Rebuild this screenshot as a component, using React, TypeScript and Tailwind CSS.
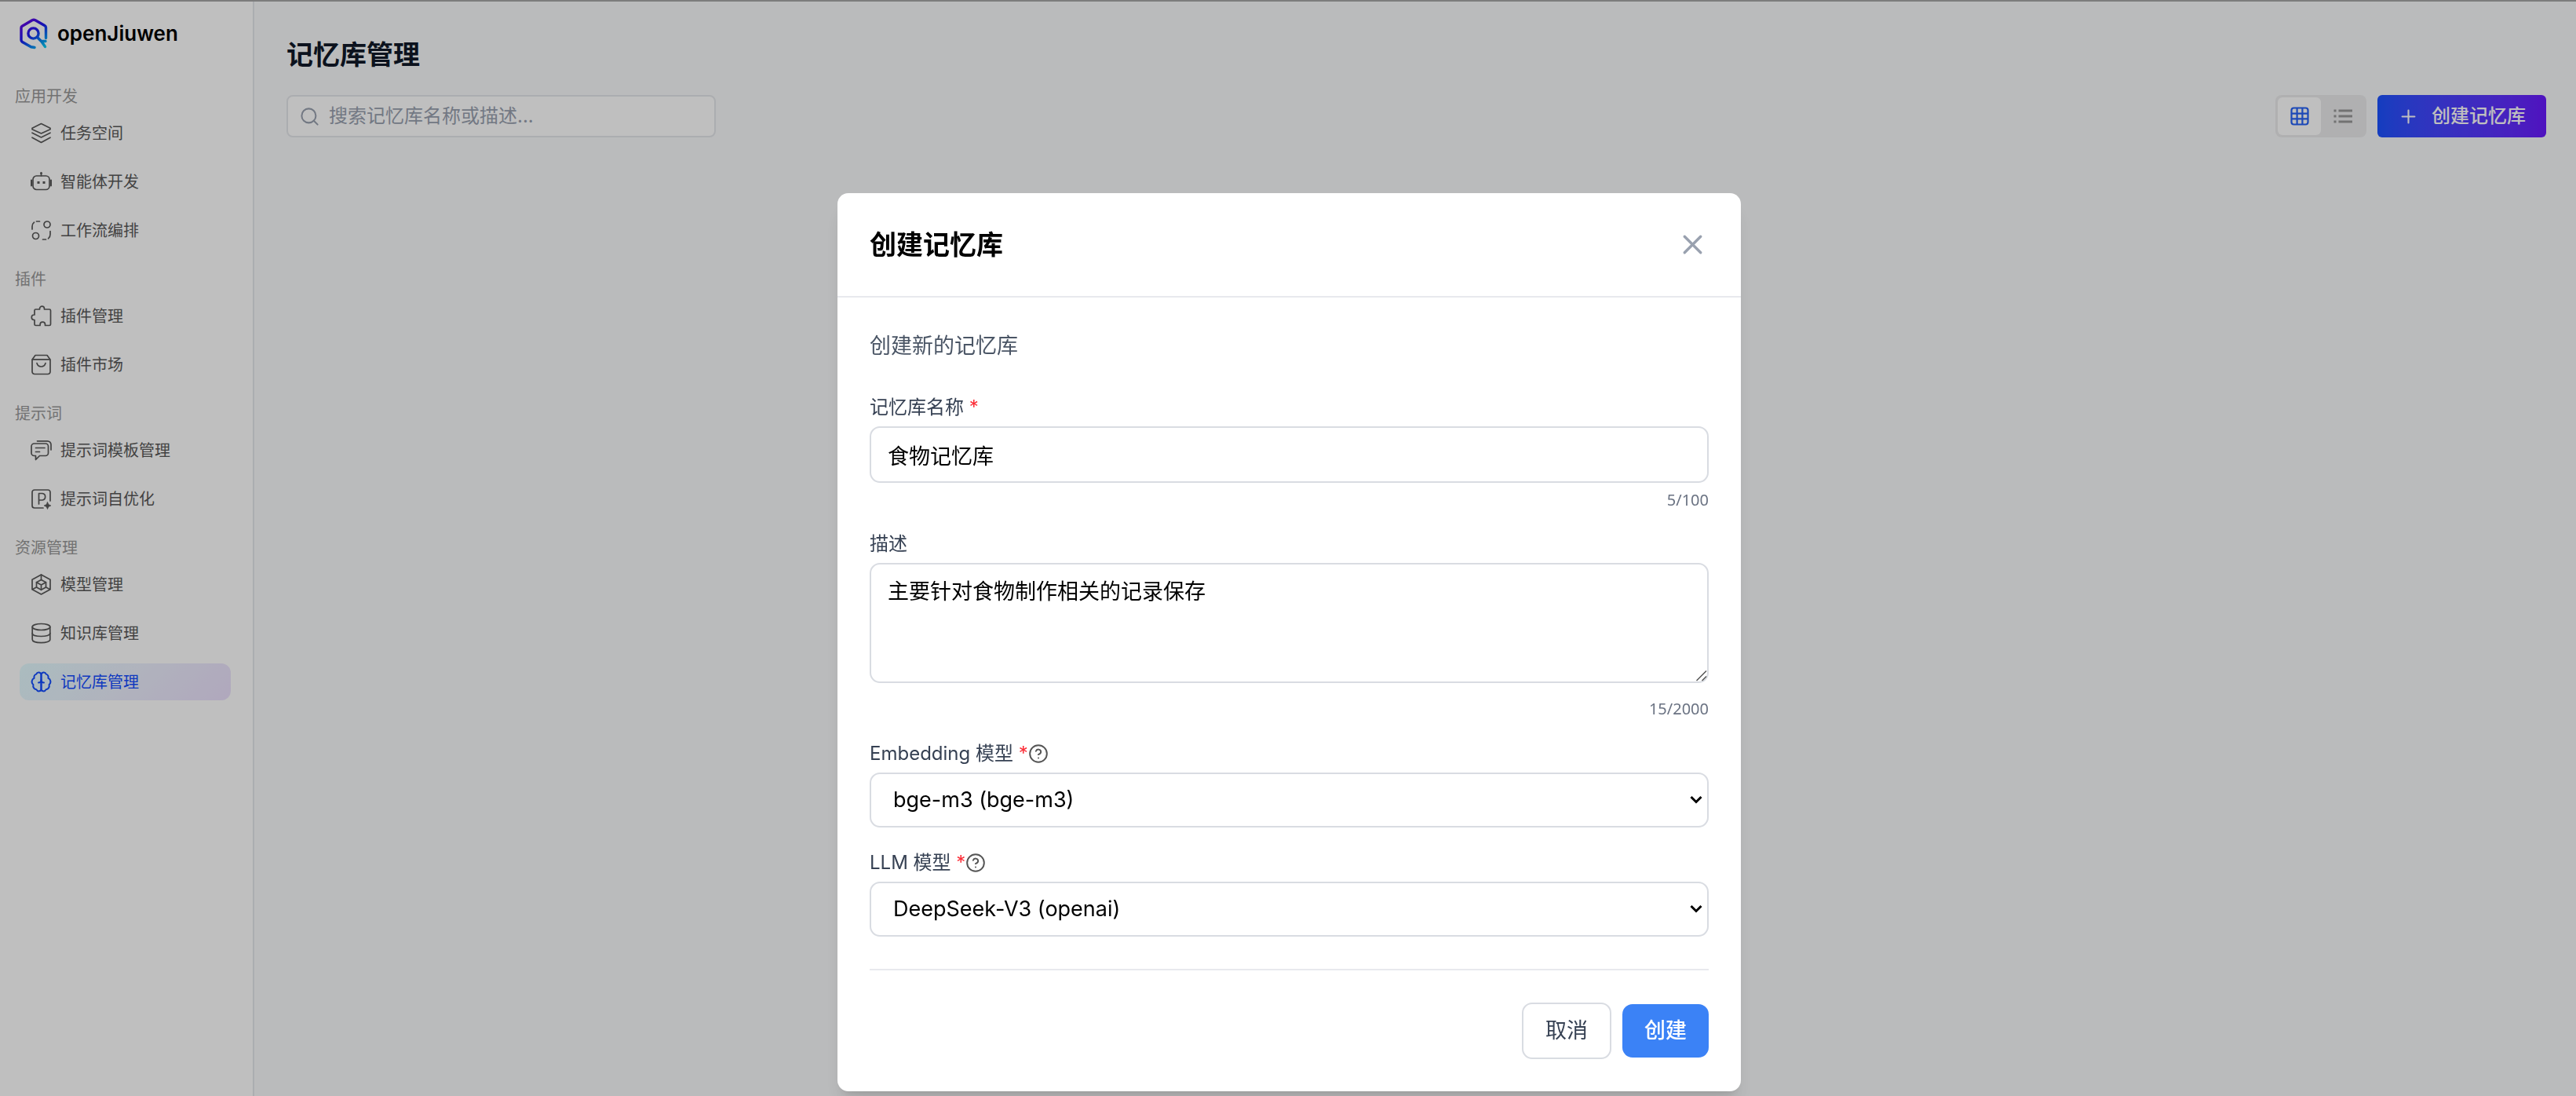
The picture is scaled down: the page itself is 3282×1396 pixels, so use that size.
import type { ReactNode } from "react";
import { CircleQuestionMark, Plus, Search, X } from "lucide-react";

const SANS = "font-['Inter','Noto_Sans_CJK_SC',sans-serif]";

function Glyph({ children }: { children: ReactNode }) {
  return (
    <svg
      viewBox="0 0 27 27"
      className="size-[27px] shrink-0"
      fill="none"
      stroke="currentColor"
      strokeWidth="1.7"
      strokeLinecap="round"
      strokeLinejoin="round"
      aria-hidden="true"
    >
      {children}
    </svg>
  );
}

const LayersGlyph = () => (
  <Glyph>
    <path d="M13.500 1.500 25 7.200V8.800L13.500 14 2 8.800V7.200Z" />
    <path d="M2 13.200 13.500 19 25 13.200" />
    <path d="M2 19.200 13.500 25.500 25 19.200" />
  </Glyph>
);

const RobotGlyph = () => (
  <Glyph>
    <rect x="3" y="6" width="21" height="17.500" rx="4.500" />
    <path d="M1 11.500V18.500M26 11.500V18.500" strokeWidth="2" />
    <path d="M13.500 6V3" />
    <circle cx="13.500" cy="2.400" r="1.500" fill="currentColor" stroke="none" />
    <rect x="8.500" y="13" width="3" height="3" fill="currentColor" stroke="none" />
    <rect x="15.500" y="13" width="3" height="3" fill="currentColor" stroke="none" />
  </Glyph>
);

const FlowGlyph = () => (
  <Glyph>
    <circle cx="21" cy="6" r="4" />
    <circle cx="6.500" cy="20.500" r="4" />
    <path d="M2 12V8.500A6.500 6.500 0 0 1 4.500 3.200M7.500 2H11.500" />
    <path d="M25 14.500V18.500A6.500 6.500 0 0 1 22.500 23.800M19.500 25H15.500" />
  </Glyph>
);

const PuzzleGlyph = () => (
  <Glyph>
    <path d="M6.500 5H11.500V4.200A3 3 0 0 1 17.500 4.200V5H24A1.500 1.500 0 0 1 25.500 6.500V24A1.500 1.500 0 0 1 24 25.500H18.500V24.300A3.200 3.200 0 0 0 12.100 24.300V25.500H6.500A1.500 1.500 0 0 1 5 24V18.500H4.500A3 3 0 0 1 4.500 12H5V6.500A1.500 1.500 0 0 1 6.500 5Z" />
  </Glyph>
);

const BagGlyph = () => (
  <Glyph>
    <path d="M6 1.500H21L25 7V22.500A3 3 0 0 1 22 25.500H5A3 3 0 0 1 2 22.500V7Z" />
    <path d="M2.500 6.800H24.500" />
    <path d="M8 11.500C9.500 17.500 17.500 17.500 19 11.500" />
  </Glyph>
);

const ChatGlyph = () => (
  <Glyph>
    <path d="M4.500 5H19A3.500 3.500 0 0 1 22.500 8.500V17A3.500 3.500 0 0 1 19 20.500H11.500L6.500 25.500V20.500H4.500A3.500 3.500 0 0 1 1 17V8.500A3.500 3.500 0 0 1 4.500 5Z" />
    <path d="M8.500 1.800H21.500A4.500 4.500 0 0 1 26 6.300V13" />
    <path d="M6.500 10.500H18M6.500 15.500H11.500" />
  </Glyph>
);

const PromptGlyph = () => (
  <Glyph>
    <path d="M25 16V5A3 3 0 0 0 22 2H5A3 3 0 0 0 2 5V22A3 3 0 0 0 5 25H16" />
    <path d="M10.500 20V6.500H15A4.300 4.300 0 0 1 15 15H10.500" />
    <path
      d="M21.500 17.500 22.900 20.600 26 22 22.900 23.400 21.500 26.500 20.100 23.400 17 22 20.100 20.600Z"
      fill="currentColor"
      strokeWidth="0.600"
    />
  </Glyph>
);

const ModelGlyph = () => (
  <Glyph>
    <path d="M13.500 1 25 7.200V19.800L13.500 26 2 19.800V7.200Z" />
    <path d="M13.500 7.500 19.500 10.700V17L13.500 20.300 7.500 17V10.700Z" />
    <path d="M7.500 10.700 13.500 14 19.500 10.700M13.500 14V20.300M13.500 1V7.500M2.500 19.500 7.500 17M24.500 19.500 19.500 17" />
  </Glyph>
);

const DatabaseGlyph = () => (
  <Glyph>
    <ellipse cx="13.500" cy="5.500" rx="11.300" ry="4" />
    <path d="M2.200 5.500V21.500C2.200 24 7 25.700 13.500 25.700S24.800 24 24.800 21.500V5.500" />
    <path d="M2.200 13.500C2.200 16 7 17.500 13.500 17.500S24.800 16 24.800 13.500" />
  </Glyph>
);

const BrainGlyph = () => (
  <Glyph>
    <g strokeWidth="2">
      <path d="M13.500 4.500A3.200 3.200 0 0 0 7.300 3.600C4.800 4.200 4 6.600 4.600 8.800 1.400 10 .400 14.500 3.400 17 2.600 20.500 4.800 23 7.300 23.200 8.800 26.400 13.500 26 13.500 22.500Z" />
      <path d="M13.500 4.500A3.200 3.200 0 0 1 19.700 3.600C22.200 4.200 23 6.600 22.400 8.800 25.600 10 26.600 14.500 23.600 17 24.400 20.500 22.200 23 19.700 23.200 18.200 26.400 13.500 26 13.500 22.500Z" />
      <path d="M10 14.500C11.800 14.500 13.500 13.200 13.500 11 13.500 13.200 15.200 14.500 17 14.500" />
    </g>
  </Glyph>
);

function Logo() {
  return (
    <svg
      viewBox="0 0 36 40"
      className="h-10 w-9 shrink-0"
      fill="none"
      strokeWidth="3.400"
      strokeLinecap="round"
      strokeLinejoin="round"
      aria-hidden="true"
    >
      <defs>
        <linearGradient id="brand" x1="6" y1="2" x2="32" y2="38" gradientUnits="userSpaceOnUse">
          <stop offset="0" stopColor="#6a00e0" />
          <stop offset="0.450" stopColor="#1a1af0" />
          <stop offset="0.720" stopColor="#0a7af0" />
          <stop offset="1" stopColor="#00d0f0" />
        </linearGradient>
      </defs>
      <g stroke="url(#brand)">
        <path d="M19 37.500 14.500 36.800 3.500 30.500Q2 29.500 2 28V12.500Q2 11 3.300 10.200L16 2.800Q18 1.800 20 2.800L31.800 9.500Q33.500 10.500 33.500 12V25.500" />
        <circle cx="17.500" cy="19.500" r="6.600" />
        <path d="M22.300 24.300 27.500 29.500H33M28 30 32.500 36.500" />
      </g>
    </svg>
  );
}

type Item = { label: string; icon: () => ReactNode; active?: boolean };

const NAV: { title: string; items: Item[] }[] = [
  {
    title: "应用开发",
    items: [
      { label: "任务空间", icon: LayersGlyph },
      { label: "智能体开发", icon: RobotGlyph },
      { label: "工作流编排", icon: FlowGlyph },
    ],
  },
  {
    title: "插件",
    items: [
      { label: "插件管理", icon: PuzzleGlyph },
      { label: "插件市场", icon: BagGlyph },
    ],
  },
  {
    title: "提示词",
    items: [
      { label: "提示词模板管理", icon: ChatGlyph },
      { label: "提示词自优化", icon: PromptGlyph },
    ],
  },
  {
    title: "资源管理",
    items: [
      { label: "模型管理", icon: ModelGlyph },
      { label: "知识库管理", icon: DatabaseGlyph },
      { label: "记忆库管理", icon: BrainGlyph, active: true },
    ],
  },
];

function Sidebar() {
  return (
    <aside className="w-[324px] shrink-0 border-r-2 border-gray-200 bg-white">
      <div className="flex items-center gap-3 pt-[21px] pl-[25px]">
        <Logo />
        <span className="text-[26px] leading-10 font-semibold text-black">openJiuwen</span>
      </div>
      <nav className="mt-12 flex flex-col gap-[27px]">
        {NAV.map((group) => (
          <section key={group.title}>
            <h2 className="pl-[19px] text-[20px] leading-6 text-[#999999]">{group.title}</h2>
            <ul className="mt-[11px] flex flex-col gap-[15px] pr-[28px] pl-[25px]">
              {group.items.map(({ label, icon: Icon, active }) => (
                <li key={label}>
                  <a
                    href="#"
                    aria-current={active ? "page" : undefined}
                    className={
                      active
                        ? "flex h-[47px] items-center gap-[11px] rounded-xl bg-linear-[135deg] from-[#e4fbff] via-[#ebeffd] to-[#ebe0fd] pl-[14px] text-[20px] text-[#144dff]"
                        : "flex h-[47px] items-center gap-[11px] rounded-xl pl-[14px] text-[20px] text-[#595959]"
                    }
                  >
                    <Icon />
                    {label}
                  </a>
                </li>
              ))}
            </ul>
          </section>
        ))}
      </nav>
    </aside>
  );
}

function Toolbar() {
  return (
    <div className="mt-[26px] flex items-center justify-between">
      <label className="flex h-[54px] w-[547px] items-center gap-[11px] rounded-lg border-2 border-gray-200 bg-white pl-[14px]">
        <Search className="size-[27px] shrink-0 text-gray-400" strokeWidth={1.8} />
        <input
          type="search"
          aria-label="搜索记忆库"
          placeholder="搜索记忆库名称或描述..."
          className="min-w-0 flex-1 bg-transparent text-[24px] outline-none placeholder:text-gray-400"
        />
      </label>
      <div className="flex items-center gap-[14px]">
        <div className="flex h-[54px] w-[116px] rounded-lg bg-[#ebebed] p-[3px]">
          <button type="button" aria-label="网格视图" className="flex flex-1 items-center justify-center rounded-md bg-white text-[#2762f5]">
            <svg viewBox="0 0 24 24" className="size-6" fill="none" stroke="currentColor" strokeWidth="2.200" aria-hidden="true">
              <rect x="1.500" y="1.500" width="21" height="21" rx="3" />
              <path d="M8.600 1.500V22.500M15.400 1.500V22.500M1.500 8.600H22.500M1.500 15.400H22.500" />
            </svg>
          </button>
          <button type="button" aria-label="列表视图" className="flex flex-1 items-center justify-center text-[#999999]">
            <svg viewBox="0 0 24 18" className="h-[18px] w-6" fill="none" stroke="currentColor" strokeWidth="2.800" aria-hidden="true">
              <path d="M0.500 2H3.500M6.500 2H24M0.500 9H3.500M6.500 9H24M0.500 16H3.500M6.500 16H24" />
            </svg>
          </button>
        </div>
        <button
          type="button"
          className="flex h-[54px] w-[215px] items-center justify-center gap-4 rounded-md bg-linear-to-r from-[#1a52ff] to-[#6a18ff] text-[24px] font-medium text-white"
        >
          <Plus className="size-[27px]" strokeWidth={1.9} />
          创建记忆库
        </button>
      </div>
    </div>
  );
}

function FieldLabel({ id, text, required, help }: { id: string; text: string; required?: boolean; help?: boolean }) {
  return (
    <div className="mb-[7px] flex items-center text-[24px] leading-[34px]">
      <label htmlFor={id} className="text-gray-700">
        {text}
        {required && <span className="text-red-500"> *</span>}
      </label>
      {help && <CircleQuestionMark className="size-[26px] text-[#555555]" strokeWidth={1.8} />}
    </div>
  );
}

function SelectField({ id, label, value }: { id: string; label: string; value: string }) {
  return (
    <div>
      <FieldLabel id={id} text={label} required help />
      <div className="relative">
        <select
          id={id}
          defaultValue={value}
          className="block h-[70px] w-full appearance-none rounded-[13px] border-2 border-[#d9dce2] bg-white pl-7 text-[27px] text-black"
        >
          <option value={value}>{value}</option>
        </select>
        <svg
          viewBox="0 0 16 12"
          className="pointer-events-none absolute top-1/2 right-2 h-3 w-4 -translate-y-1/2"
          fill="none"
          stroke="black"
          strokeWidth="3"
          aria-hidden="true"
        >
          <path d="M1.500 2 8 8.500 14.500 2" />
        </svg>
      </div>
    </div>
  );
}

const COUNTER = "text-right font-['Noto_Sans',sans-serif] text-[20px] leading-7 text-gray-500";

function CreateDialog() {
  return (
    <div className="fixed inset-0 flex items-start justify-center bg-black/25 pt-[246px] pl-[3px]">
      <div role="dialog" aria-modal="true" aria-labelledby="dialog-title" className="w-full max-w-[1151px] rounded-[14px] bg-white shadow-xl">
        <header className="flex items-center justify-between border-b-2 border-[#e8e9ee] p-[41px]">
          <h2 id="dialog-title" className="text-[34px] leading-[49px] font-semibold text-black">
            创建记忆库
          </h2>
          <button type="button" aria-label="关闭" className="text-gray-400">
            <X className="size-[41px]" strokeWidth={2} />
          </button>
        </header>
        <form className="p-[41px]">
          <p className="text-[27px] leading-[41px] text-gray-600">创建新的记忆库</p>

          <div className="mt-[41px]">
            <FieldLabel id="name" text="记忆库名称" required />
            <input
              id="name"
              type="text"
              defaultValue="食物记忆库"
              className="block h-[72px] w-full rounded-[13px] border-2 border-[#d9dce2] px-[21px] text-[27px] text-black"
            />
            <p className={`${COUNTER} mt-2`}>5/100</p>
          </div>

          <div className="mt-[25px]">
            <FieldLabel id="description" text="描述" />
            <div className="relative">
              <textarea
                id="description"
                defaultValue="主要针对食物制作相关的记录保存"
                className="block h-[153px] w-full resize-none rounded-[13px] border-2 border-[#d9dce2] px-[21px] py-[14px] text-[27px] leading-[41px] text-black"
              />
              <svg
                viewBox="0 0 14 14"
                className="pointer-events-none absolute right-[2px] bottom-[2px] size-[14px]"
                stroke="#555555"
                strokeWidth="1.500"
                aria-hidden="true"
              >
                <path d="M0.500 13 13 0.500M7.500 13 13 7.500" />
              </svg>
            </div>
            <p className={`${COUNTER} mt-[19px]`}>15/2000</p>
          </div>

          <div className="mt-[26px] flex flex-col gap-[28px]">
            <SelectField id="embedding" label="Embedding 模型" value="bge-m3 (bge-m3)" />
            <SelectField id="llm" label="LLM 模型" value="DeepSeek-V3 (openai)" />
          </div>

          <footer className="mt-[41px] flex items-center justify-end gap-[14px] border-t-2 border-[#e8e9ee] pt-[41px]">
            <button type="button" className="h-[72px] rounded-[13px] border-2 border-[#d9dce2] px-7 text-[27px] text-gray-700">
              取消
            </button>
            <button type="submit" className="h-[68px] rounded-[13px] bg-[#3b82f6] px-7 text-[27px] font-medium text-white">
              创建
            </button>
          </footer>
        </form>
      </div>
    </div>
  );
}

export default function App() {
  return (
    <div className={`${SANS} flex min-h-screen border-t-2 border-[#a6a6a6] bg-gray-50`}>
      <Sidebar />
      <main className="min-w-0 flex-1 pt-[42px] pr-[38px] pl-[41px]">
        <h1 className="text-[34px] leading-[51px] font-semibold text-gray-900">记忆库管理</h1>
        <Toolbar />
      </main>
      <CreateDialog />
    </div>
  );
}
